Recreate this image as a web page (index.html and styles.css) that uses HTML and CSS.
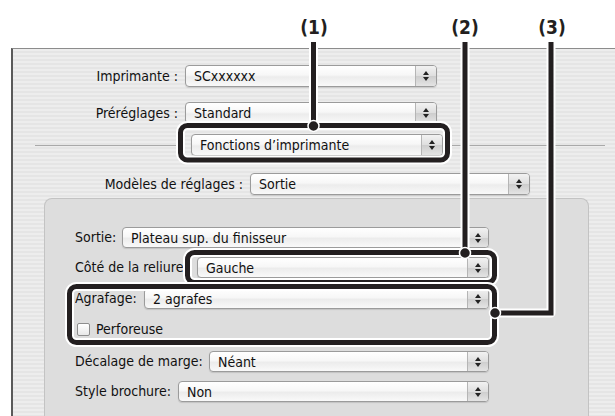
FILE: index.html
```html
<!DOCTYPE html>
<html lang="fr">
<head>
<meta charset="utf-8">
<link rel="stylesheet" href="styles.css">
</head>
<body>
<div class="page">
  <div class="top-space"></div>
  <div class="window">
    <div class="row row-main">
      <span class="label lbl-main">Imprimante :</span>
      <div class="select sel-main"><span class="val">SCxxxxxx</span><span class="step"><i class="up"></i><i class="dn"></i></span></div>
    </div>
    <div class="row row-main r2">
      <span class="label lbl-main">Préréglages :</span>
      <div class="select sel-main"><span class="val">Standard</span><span class="step"><i class="up"></i><i class="dn"></i></span></div>
    </div>
    <div class="row row-sep">
      <span class="sep sep-left"></span>
      <div class="select sel-fn"><span class="val">Fonctions d’imprimante</span><span class="step"><i class="up"></i><i class="dn"></i></span></div>
      <span class="sep sep-right"></span>
    </div>
    <div class="row row-model">
      <span class="label lbl-model">Modèles de réglages :</span>
      <div class="select sel-model"><span class="val">Sortie</span><span class="step"><i class="up"></i><i class="dn"></i></span></div>
    </div>
    <div class="group">
      <div class="grow g1">
        <span class="label">Sortie:</span>
        <div class="select sel-g"><span class="val">Plateau sup. du finisseur</span><span class="step"><i class="up"></i><i class="dn"></i></span></div>
      </div>
      <div class="grow g2">
        <span class="label">Côté de la reliure:</span>
        <div class="select sel-g"><span class="val">Gauche</span><span class="step"><i class="up"></i><i class="dn"></i></span></div>
      </div>
      <div class="grow g3">
        <span class="label">Agrafage:</span>
        <div class="select sel-g"><span class="val">2 agrafes</span><span class="step"><i class="up"></i><i class="dn"></i></span></div>
      </div>
      <div class="grow g4">
        <span class="check"></span>
        <span class="label">Perforeuse</span>
      </div>
      <div class="grow g5">
        <span class="label">Décalage de marge:</span>
        <div class="select sel-g"><span class="val">Néant</span><span class="step"><i class="up"></i><i class="dn"></i></span></div>
      </div>
      <div class="grow g6">
        <span class="label">Style brochure:</span>
        <div class="select sel-g"><span class="val">Non</span><span class="step"><i class="up"></i><i class="dn"></i></span></div>
      </div>
    </div>
  </div>

  <div class="callouts">
    <span class="num n1">(1)</span>
    <span class="num n2">(2)</span>
    <span class="num n3">(3)</span>
    <svg class="lines" width="615" height="416" viewBox="0 0 615 416">
      <g fill="none" stroke="#fff" stroke-width="9" stroke-linejoin="round">
        <line x1="313.5" y1="42" x2="313.5" y2="126"/>
        <rect x="180.5" y="125.5" width="267" height="34.5" rx="7"/>
        <line x1="465" y1="42" x2="465" y2="253"/>
        <rect x="187.5" y="252.5" width="307" height="30" rx="7"/>
      </g>
      <g fill="none" stroke="#231f20" stroke-width="5" stroke-linejoin="round">
        <line x1="313.5" y1="42" x2="313.5" y2="126"/>
        <rect x="180.5" y="125.5" width="267" height="34.5" rx="7"/>
        <line x1="465" y1="42" x2="465" y2="253"/>
        <rect x="187.5" y="252.5" width="307" height="30" rx="7"/>
      </g>
      <g fill="none" stroke="#fff" stroke-width="9" stroke-linejoin="round">
        <rect x="69.5" y="286.5" width="425" height="56" rx="7"/>
        <path d="M551 42 V313 H495"/>
      </g>
      <g fill="none" stroke="#231f20" stroke-width="5" stroke-linejoin="miter">
        <rect x="69.5" y="286.5" width="425" height="56" rx="7"/>
        <path d="M551 42 V313 H495"/>
      </g>
      <g fill="#231f20" stroke="#fff" stroke-width="1.5">
        <circle cx="313.5" cy="126" r="5.5"/>
        <circle cx="465" cy="253" r="5.5"/>
        <circle cx="495" cy="313" r="5.5"/>
      </g>
    </svg>
  </div>
</div>
</body>
</html>
```

FILE: styles.css
```css
* { box-sizing: border-box; }
html, body { margin: 0; padding: 0; background: #fff; }
body {
  width: 615px;
  height: 416px;
  overflow: hidden;
  font-family: "DejaVu Sans Condensed", "DejaVu Sans", "Liberation Sans", sans-serif;
  font-size: 14px;
  color: #111;
}
.page { position: relative; width: 615px; height: 416px; }
.top-space { height: 48px; }

.window {
  margin-left: 11px;
  height: 368px;
  border-top: 1px solid #8c8c8c;
  border-left: 2px solid #5a5a5a;
  background: repeating-linear-gradient(to bottom, #ededed 0 2px, #e5e5e5 2px 4px);
  padding-top: 16px;
}

.row { display: flex; align-items: center; height: 22px; }
.r2 { margin-top: 15px; }
.label { white-space: nowrap; line-height: 22px; }
.lbl-main { width: 172px; text-align: right; padding-right: 7px; }
.sel-main { width: 252px; }

.row-sep { margin-top: 10px; }
.sep { height: 1px; background: #a9a9a9; }
.sep-left { width: 144px; margin-left: 22px; margin-right: 12px; }
.sel-fn { width: 252px; }
.sep-right { flex: 1; margin-left: 8px; margin-right: 10px; }

.row-model { margin-top: 17px; height: 21px; }
.lbl-model { width: 237px; text-align: right; padding-right: 7px; }
.sel-model { width: 280px; height: 21px; }

.select {
  position: relative;
  display: flex;
  align-items: center;
  height: 22px;
  border: 1px solid #9b9b9b;
  border-radius: 4px;
  background: linear-gradient(to bottom, #ffffff 0%, #f7f7f7 45%, #ececec 55%, #f9f9f9 100%);
  box-shadow: 0 1px 1px rgba(0,0,0,0.12);
  overflow: hidden;
}
.val { flex: 1; padding-left: 8px; white-space: nowrap; line-height: 20px; }
.step {
  width: 21px;
  height: 100%;
  border-left: 1px solid #b5b5b5;
  background: linear-gradient(to bottom, #f2f2f2 0%, #dedede 50%, #cdcdcd 51%, #e4e4e4 100%);
  display: flex;
  flex-direction: column;
  align-items: center;
  justify-content: center;
  gap: 2px;
}
.step i { display: block; width: 0; height: 0; border-left: 3px solid transparent; border-right: 3px solid transparent; }
.step .up { border-bottom: 4px solid #222; }
.step .dn { border-top: 4px solid #222; }

.group {
  margin: 4px 26px 0 31px;
  height: 230px;
  border: 1px solid #c3c3c3;
  border-bottom: none;
  border-radius: 8px 8px 0 0;
  background: #dddddd;
  padding: 28px 99px 0 30px;
}
.grow { display: flex; align-items: center; height: 21px; }
.grow .label { flex: none; overflow: hidden; line-height: 21px; }
.sel-g { flex: 1; height: 21px; }
.g1 .label { width: 47px; }
.g2 { margin-top: 9px; }
.g2 .label { width: 122px; }
.g3 { margin-top: 10px; }
.g3 .label { width: 69px; }
.g4 { margin-top: 12px; height: 16px; }
.g4 .label { width: auto; }
.check {
  width: 13px; height: 13px;
  border: 1px solid #8d8d8d;
  border-radius: 2px;
  background: linear-gradient(#fff, #e8e8e8);
  margin: 0 6px 0 2px;
}
.g5 { margin-top: 14px; }
.g5 .label { width: 134px; }
.g6 { margin-top: 9px; }
.g6 .label { width: 103px; }

.callouts { position: absolute; left: 0; top: 0; width: 615px; height: 416px; pointer-events: none; }
.lines { position: absolute; left: 0; top: 0; }
.num {
  position: absolute;
  top: 16px;
  font-family: "DejaVu Sans Condensed", "Liberation Sans", sans-serif;
  font-weight: bold;
  font-size: 19px;
  line-height: 22px;
  color: #231f20;
  transform: translateX(-50%);
}
.n1 { left: 314px; }
.n2 { left: 465px; }
.n3 { left: 552px; }
```
